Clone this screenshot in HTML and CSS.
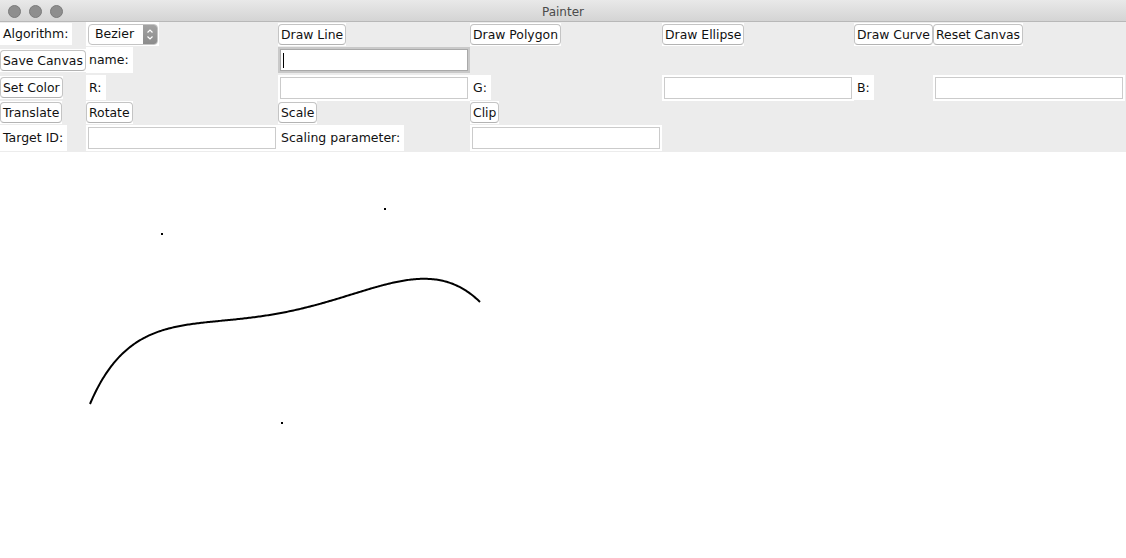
FILE: index.html
```html
<!DOCTYPE html>
<html>
<head>
<meta charset="utf-8">
<title>Painter</title>
<link rel="stylesheet" href="styles.css">
</head>
<body>
<div class="window">
  <div class="titlebar">
    <div class="lights"><span class="light"></span><span class="light"></span><span class="light"></span></div>
    <div class="title">Painter</div>
  </div>
  <div class="panel">
    <!-- row 1 -->
    <div class="cell"><span class="lbl">Algorithm:</span></div>
    <div class="cell"><span class="combo-wrap"><span class="combo"><span class="combo-text">Bezier</span><span class="stepper"><svg width="14" height="19" viewBox="0 0 14 19"><path d="M4.5 7.5 L7 5 L9.5 7.5 M4.5 11.5 L7 14 L9.5 11.5" fill="none" stroke="#fff" stroke-width="1.2"/></svg></span></span></span></div>
    <div class="cell"><span class="btn-wrap"><span class="btn">Draw Line</span></span></div>
    <div class="cell"><span class="btn-wrap"><span class="btn">Draw Polygon</span></span></div>
    <div class="cell"><span class="btn-wrap"><span class="btn">Draw Ellipse</span></span></div>
    <div class="cell"><span class="btn-wrap"><span class="btn">Draw Curve</span></span></div>
    <div class="cell"><span class="btn-wrap"><span class="btn">Reset Canvas</span></span></div>
    <!-- row 2 -->
    <div class="cell"><span class="btn-wrap"><span class="btn">Save Canvas</span></span></div>
    <div class="cell"><span class="lbl">name:</span></div>
    <div class="cell"><span class="field-wrap"><span class="field focused"><span class="caret"></span></span></span></div>
    <div class="cell"></div>
    <div class="cell"></div>
    <div class="cell"></div>
    <div class="cell"></div>
    <!-- row 3 -->
    <div class="cell"><span class="btn-wrap"><span class="btn">Set Color</span></span></div>
    <div class="cell"><span class="lbl">R:</span></div>
    <div class="cell"><span class="field-wrap"><span class="field"></span></span></div>
    <div class="cell"><span class="lbl">G:</span></div>
    <div class="cell"><span class="field-wrap"><span class="field"></span></span></div>
    <div class="cell"><span class="lbl">B:</span></div>
    <div class="cell"><span class="field-wrap"><span class="field"></span></span></div>
    <!-- row 4 -->
    <div class="cell"><span class="btn-wrap"><span class="btn">Translate</span></span></div>
    <div class="cell"><span class="btn-wrap"><span class="btn">Rotate</span></span></div>
    <div class="cell"><span class="btn-wrap"><span class="btn">Scale</span></span></div>
    <div class="cell"><span class="btn-wrap"><span class="btn">Clip</span></span></div>
    <div class="cell"></div>
    <div class="cell"></div>
    <div class="cell"></div>
    <!-- row 5 -->
    <div class="cell"><span class="lbl">Target ID:</span></div>
    <div class="cell"><span class="field-wrap"><span class="field"></span></span></div>
    <div class="cell"><span class="lbl">Scaling parameter:</span></div>
    <div class="cell"><span class="field-wrap"><span class="field"></span></span></div>
    <div class="cell"></div>
    <div class="cell"></div>
    <div class="cell"></div>
  </div>
  <div class="canvas">
    <svg class="drawing" width="1126" height="406" viewBox="0 0 1126 406">
      <polyline id="curve" fill="none" stroke="#000" stroke-width="2" stroke-linejoin="round" points=""/>
      <rect x="161" y="81" width="2" height="2" fill="#000"/>
      <rect x="281" y="270" width="2" height="2" fill="#000"/>
      <rect x="384" y="56" width="2" height="2" fill="#000"/>
    </svg>
  </div>
</div>
<script src="app.js"></script>
</body>
</html>
```

FILE: styles.css
```css
html, body {
  margin: 0;
  padding: 0;
  background: #fff;
}
body {
  width: 1126px;
  height: 558px;
  overflow: hidden;
  font-family: "DejaVu Sans", "Liberation Sans", sans-serif;
  font-size: 12.5px;
  color: #111;
}
.window {
  display: flex;
  flex-direction: column;
  height: 558px;
}
.titlebar {
  position: relative;
  height: 21px;
  border-bottom: 1px solid #b8b8b8;
  background: linear-gradient(#e9e9e9, #d4d4d4);
  display: flex;
  align-items: center;
  justify-content: center;
}
.lights {
  position: absolute;
  left: 8px;
  top: 5px;
  display: flex;
  gap: 8px;
}
.light {
  width: 11px;
  height: 11px;
  border-radius: 50%;
  background: #8e8e8e;
  border: 0.5px solid #7b7b7b;
}
.title {
  font-size: 12px;
  color: #4b4b4b;
  padding-top: 2px;
}
.panel {
  display: grid;
  grid-template-columns: 86px 192px 192px 192px 192px 79px 193px;
  grid-template-rows: 24px 28px 27px 23px 28px;
  background: #ececec;
}
.cell {
  display: flex;
  align-items: center;
  min-width: 0;
}
.lbl {
  align-self: stretch;
  display: flex;
  align-items: center;
  background: #fff;
  padding: 0 4px 1px 3px;
  white-space: nowrap;
  margin: 1px 0;
}
.btn-wrap {
  background: #fff;
  padding: 1px 0;
  display: flex;
}
.btn {
  display: flex;
  align-items: center;
  height: 19px;
  padding: 0 2px;
  border: 1px solid #c4c4c4;
  border-bottom-color: #b3b3b3;
  border-radius: 4px;
  white-space: nowrap;
  font-size: 12.4px;
}
.combo-wrap {
  background: #fff;
  padding: 1px 1px 1px 2px;
  display: flex;
  align-self: stretch;
  align-items: center;
}
.combo {
  display: flex;
  align-items: center;
  width: 68px;
  height: 19px;
  border: 1px solid #c4c4c4;
  border-radius: 4px;
}
.combo-text {
  padding-left: 6px;
  padding-bottom: 1px;
}
.stepper {
  margin-left: auto;
  width: 14px;
  height: 19px;
  background: linear-gradient(#a3a3a3, #8c8c8c);
  border-radius: 0 3px 3px 0;
  display: flex;
}
.field-wrap {
  background: #fff;
  padding: 2px;
  display: flex;
}
.field {
  display: flex;
  align-items: center;
  width: 186px;
  height: 20px;
  border: 1px solid #cbcbcb;
  background: #fff;
}
.field.focused {
  border-color: #a9a9a9;
  box-shadow: 0 0 0 2px #c9c9c9;
}
.caret {
  width: 1px;
  height: 15px;
  background: #000;
  margin-left: 2px;
}
.canvas {
  flex: 1;
  background: #fff;
}
.drawing {
  display: block;
}
```

FILE: app.js
```js
(function () {
  var P = [[90, 252], [162, 82], [282, 271], [385, 57], [480, 150]];
  var C = [1, 4, 6, 4, 1];
  var pts = [];
  var n = 300;
  for (var k = 0; k <= n; k++) {
    var t = k / n, x = 0, y = 0;
    for (var i = 0; i < 5; i++) {
      var b = C[i] * Math.pow(1 - t, 4 - i) * Math.pow(t, i);
      x += b * P[i][0];
      y += b * P[i][1];
    }
    pts.push(x.toFixed(2) + "," + y.toFixed(2));
  }
  document.getElementById("curve").setAttribute("points", pts.join(" "));
})();
```
